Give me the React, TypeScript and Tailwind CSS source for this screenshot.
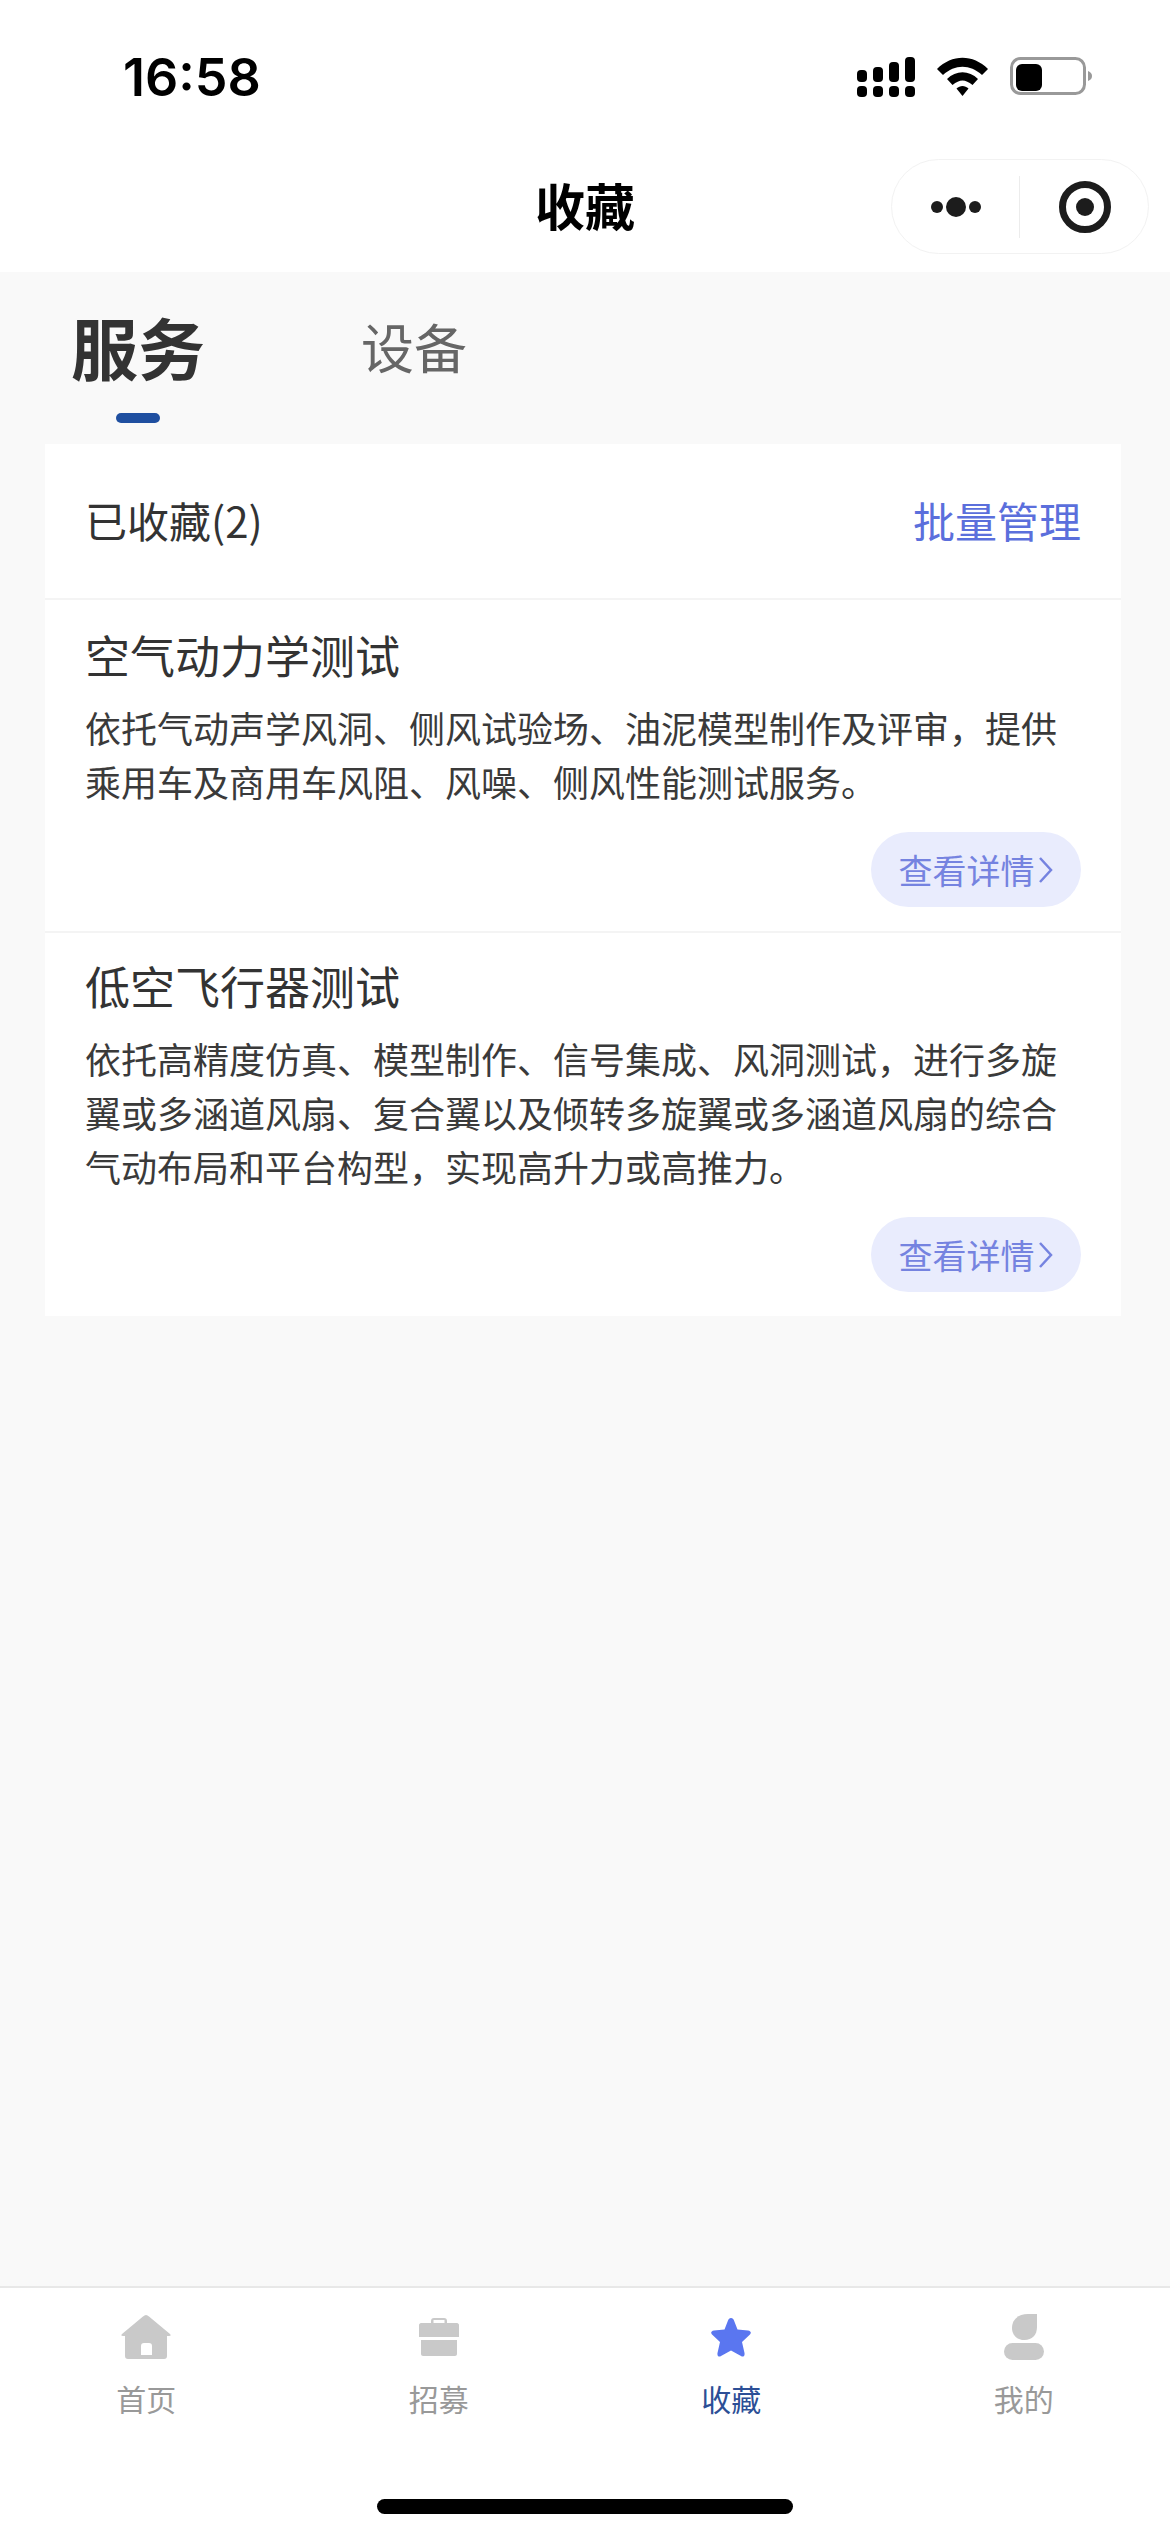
const cjk = "font-['PingFang_SC','Noto_Sans_CJK_SC',sans-serif]";

const tabs = [
  { label: '首页', icon: 'home' },
  { label: '招募', icon: 'case' },
  { label: '收藏', icon: 'star' },
  { label: '我的', icon: 'user' },
];

const items = [
  {
    title: '空气动力学测试',
    lines: ['依托气动声学风洞、侧风试验场、油泥模型制作及评审，提供', '乘用车及商用车风阻、风噪、侧风性能测试服务。'],
  },
  {
    title: '低空飞行器测试',
    lines: [
      '依托高精度仿真、模型制作、信号集成、风洞测试，进行多旋',
      '翼或多涵道风扇、复合翼以及倾转多旋翼或多涵道风扇的综合',
      '气动布局和平台构型，实现高升力或高推力。',
    ],
  },
];

const StatusIcons = () => (
  <svg width="240" height="44" viewBox="0 0 240 44" className="block">
    <g fill="#000">
      <rect x="0" y="15" width="10" height="12" rx="4" />
      <rect x="16" y="12" width="10" height="15" rx="4" />
      <rect x="32" y="7" width="10" height="20" rx="4" />
      <rect x="48" y="2" width="10" height="25" rx="4" />
      <rect x="0" y="31" width="10" height="11" rx="4" />
      <rect x="16" y="31" width="10" height="11" rx="4" />
      <rect x="32" y="31" width="10" height="11" rx="4" />
      <rect x="48" y="31" width="10" height="11" rx="4" />
      <path d="M80 14 C95 -1 116 -1 131 14 L125 20 C113 9 98 9 86 20 Z" />
      <path d="M90 24 C99 15 112 15 121 24 L115.500 30 C108 24 103 24 95.500 30 Z" />
      <path d="M99.500 33.500 C103 30 108 30 111.500 33.500 L105.500 41 Z" />
      <rect x="159" y="9" width="26" height="27" rx="6" />
    </g>
    <rect x="154.500" y="3.500" width="73" height="35" rx="9" fill="none" stroke="#999" strokeWidth="3" />
    <path d="M231 16 C234 17 235 19 235 21 C235 23 234 25 231 26 Z" fill="#999" />
  </svg>
);

const Capsule = () => (
  <div className="flex h-[95px] w-[258px] items-center rounded-full border border-[#f2f2f2] bg-white">
    <div className="flex flex-1 items-center justify-center gap-[3px] pl-[1px]">
      <span className="h-[12px] w-[12px] rounded-full bg-[#1c1c1c]" />
      <span className="h-[20px] w-[20px] rounded-full bg-[#1c1c1c]" />
      <span className="h-[12px] w-[12px] rounded-full bg-[#1c1c1c]" />
    </div>
    <div className="h-[62px] w-px bg-[#ececec]" />
    <div className="flex flex-1 items-center justify-center pl-[2px]">
      <div className="flex h-[52px] w-[52px] items-center justify-center rounded-full border-[7px] border-[#1c1c1c]">
        <span className="h-[18px] w-[18px] rounded-full bg-[#1c1c1c]" />
      </div>
    </div>
  </div>
);

const TabIcon = ({ name }: { name: string }) => {
  if (name === 'home') {
    return (
      <svg width="50" height="44" viewBox="0 0 50 44" fill="#c9c9c9">
        <path fillRule="evenodd" d="M25 0 C26 0 27 0.500 28 1.500 L49 19 C50 20 50 21 48 21 L46 21 L46 41 C46 43 45 44 43 44 L7 44 C5 44 4 43 4 41 L4 21 L2 21 C0 21 0 20 1 19 L22 1.500 C23 0.500 24 0 25 0 Z M20 40 L31 40 L31 31 C31 29 30 28 28 28 L23 28 C21 28 20 29 20 31 Z" />
      </svg>
    );
  }
  if (name === 'case') {
    return (
      <svg width="40" height="38" viewBox="0 0 40 38" fill="#c9c9c9">
        <path fillRule="evenodd" d="M12 5 L12 3 C12 1 13 0 15 0 L25 0 C27 0 28 1 28 3 L28 5 L38 5 C39 5 40 6 40 7 L40 19 L0 19 L0 7 C0 6 1 5 2 5 Z M14.500 2 L14.500 5 L25.500 5 L25.500 2 Z" />
        <path d="M2 22 L38 22 L38 36 C38 37 37 38 36 38 L4 38 C3 38 2 37 2 36 Z" />
      </svg>
    );
  }
  if (name === 'star') {
    return (
      <svg width="40" height="39" viewBox="0 0 40 39" fill="#5a76f0">
        <path d="M20 0 C21.500 0 22.500 1 23 2.500 L26.500 11.500 L37 12.500 C40 13 40.500 15 39 16.500 L31 24 L33.500 35 C34 38 32 39.500 30 38 L20 32.500 L10 38 C8 39.500 6 38 6.500 35 L9 24 L1 16.500 C-0.500 15 0 13 3 12.500 L13.500 11.500 L17 2.500 C17.500 1 18.500 0 20 0 Z" />
      </svg>
    );
  }
  return (
    <svg width="40" height="46" viewBox="0 0 40 46" fill="#c9c9c9">
      <path d="M33 0 L33 13 C33 21 28 26 20.500 26 C13 26 8 21 8 14 C8 5 15 0 24 0 Z" />
      <rect x="0" y="29" width="40" height="17" rx="8.500" />
    </svg>
  );
};

export default function App() {
  return (
    <div className={`flex h-[2532px] w-[1170px] flex-col bg-[#f9f9f9] ${cjk}`}>
      <header className="h-[272px] bg-white">
        <div className="flex h-[159px] items-start justify-between pl-[123px] pr-[73px] pt-[51px]">
          <span className="font-['Inter',sans-serif] text-[52px] font-semibold leading-[54px] text-black">16:58</span>
          <div className="pt-[4px]">
            <StatusIcons />
          </div>
        </div>
        <div className="relative flex h-[95px] items-center justify-center">
          <h1 className="mb-[6px] text-[50px] font-bold leading-[60px] text-black">收藏</h1>
          <div className="absolute right-[21px] top-0">
            <Capsule />
          </div>
        </div>
      </header>

      <div className="flex h-[172px] items-start pl-[72px]">
        <div className="flex w-[132px] flex-col items-center pt-[29px]">
          <span className="whitespace-nowrap text-[67px] font-bold leading-[90px] text-[#333]">服务</span>
          <span className="mt-[22px] h-[10px] w-[44px] rounded-full bg-[#1f4fa0]" />
        </div>
        <span className="ml-[157px] whitespace-nowrap pt-[37px] text-[53px] leading-[74px] text-[#666]">设备</span>
      </div>

      <main className="ml-[45px] mr-[49px] bg-white">
        <div className="flex h-[156px] items-center justify-between border-b-2 border-[#f4f4f4] px-[40px] pb-[2px]">
          <span className="text-[42px] leading-[56px] text-[#333]">已收藏(2)</span>
          <span className="text-[42px] leading-[56px] text-[#5b6fdc]">批量管理</span>
        </div>
        {items.map((item, i) => (
          <section key={item.title} className={`px-[40px] ${i === 0 ? 'border-b-2 border-[#f4f4f4] pb-[24px] pt-[23px]' : 'pb-[24px] pt-[21px]'}`}>
            <h2 className="text-[45px] leading-[64px] text-[#333]">{item.title}</h2>
            <div className="mt-[13px] text-[36px] leading-[54px] text-[#3a3a3a]">
              {item.lines.map((line) => (
                <p key={line} className="whitespace-nowrap">{line}</p>
              ))}
            </div>
            <div className="mt-[24px] flex justify-end">
              <button className="flex h-[75px] w-[210px] items-center justify-center rounded-full bg-[#e9ecfd] text-[34px] text-[#7583e0]">
                查看详情
                <svg width="16" height="28" viewBox="0 0 16 28" fill="none" stroke="#7583e0" strokeWidth="2.500" className="ml-[3px]">
                  <path d="M2 2 L13 14 L2 26" />
                </svg>
              </button>
            </div>
          </section>
        ))}
      </main>

      <div className="flex-1" />

      <nav className="h-[246px] border-t-2 border-[#e8e8e8] bg-white">
        <div className="grid grid-cols-4">
          {tabs.map((tab, i) => (
            <div key={tab.label} className="flex flex-col items-center pt-[26px]">
              <div className="flex h-[46px] items-center justify-center">
                <TabIcon name={tab.icon} />
              </div>
              <span className={`mt-[18px] text-[30px] leading-[40px] ${i === 2 ? 'text-[#2c4f96]' : 'text-[#999]'}`}>{tab.label}</span>
            </div>
          ))}
        </div>
        <div className="mx-auto mt-[81px] h-[15px] w-[416px] rounded-full bg-black" />
      </nav>
    </div>
  );
}
